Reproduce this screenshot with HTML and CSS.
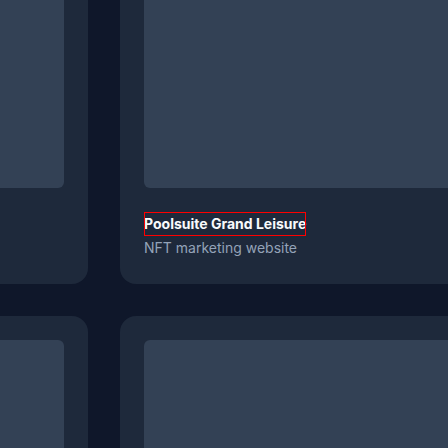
FILE: index.html
```html
<!DOCTYPE html>
<html lang="en">
<head>
<meta charset="utf-8">
<title>Projects</title>
<link rel="stylesheet" href="styles.css">
</head>
<body>
<main class="grid">
  <article class="card">
    <div class="thumb"></div>
  </article>
  <article class="card">
    <div class="thumb"></div>
    <h3 class="title title-outlined">Poolsuite Grand Leisure</h3>
    <p class="desc">NFT marketing website</p>
  </article>
  <article class="card">
    <div class="thumb"></div>
  </article>
  <article class="card">
    <div class="thumb"></div>
  </article>
  <article class="card">
    <div class="thumb"></div>
  </article>
  <article class="card">
    <div class="thumb"></div>
  </article>
</main>
</body>
</html>
```
FILE: styles.css
```css
html, body {
  margin: 0;
  padding: 0;
  overflow: hidden;
  background: #0f172a;
  width: 448px;
  height: 448px;
}
body {
  font-family: Inter, "Noto Sans", sans-serif;
}
.grid {
  display: grid;
  grid-template-columns: 360px 360px 360px;
  gap: 32px;
  margin-top: -36px;
  margin-left: -272px;
}
.card {
  background: #1e293b;
  border-radius: 16px;
  padding: 24px 24px 26px;
  display: flex;
  flex-direction: column;
}
.thumb {
  height: 200px;
  background: #334155;
  border-radius: 6px;
}
.title {
  margin: 24px 0 0;
  font-size: 14px;
  line-height: 24px;
  font-weight: 700;
  color: #f8fafc;
  align-self: flex-start;
}
.title-outlined {
  outline: 1px solid #ff0000;
  outline-offset: -1px;
}
.desc {
  margin: 2px 0 0;
  font-size: 14px;
  line-height: 20px;
  color: #94a3b8;
}
```
